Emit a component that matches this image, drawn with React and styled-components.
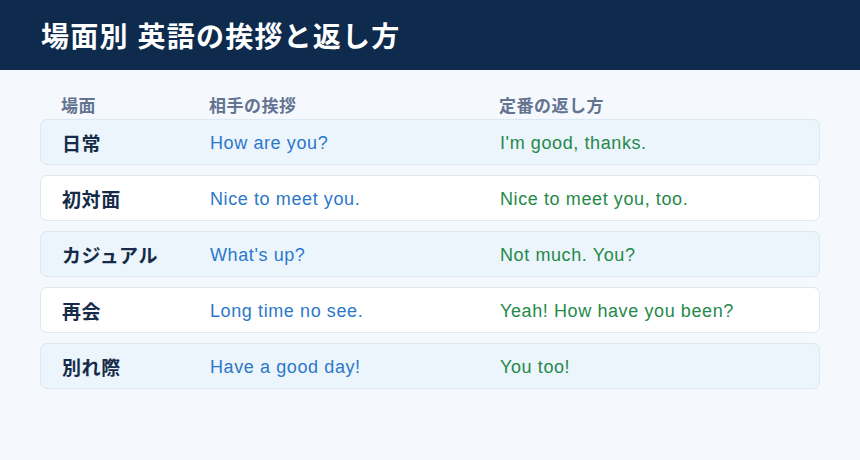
import React from "react";
import styled, { createGlobalStyle } from "styled-components";

const Global = createGlobalStyle`
  html, body { margin: 0; padding: 0; }
  body {
    width: 860px; height: 460px; overflow: hidden;
    background: #f5f9fe;
    font-family: "Liberation Sans", "Noto Sans CJK JP", sans-serif;
  }
`;

const Page = styled.div`
  width: 860px;
  height: 460px;
  background: #f5f9fe;
  display: flex;
  flex-direction: column;
`;

const Header = styled.header`
  height: 70px;
  background: #0e2b4e;
  display: flex;
  align-items: center;
  padding: 0 41px;
  box-sizing: border-box;
`;

const Title = styled.h1`
  margin: 0;
  color: #ffffff;
  font-size: 28px;
  font-weight: 700;
  letter-spacing: 1.2px;
`;

const Table = styled.div`
  margin: 21px 40px 0;
  display: flex;
  flex-direction: column;
  gap: 10px;
`;

const Row = styled.div`
  display: grid;
  grid-template-columns: 148px 290px 1fr;
  align-items: center;
  padding: 0 21px;
  height: ${(p) => (p.$head ? "26px" : "46px")};
  box-sizing: border-box;
  border-radius: 7px;
  border: ${(p) => (p.$head ? "none" : "1px solid #dbe7f3")};
  background: ${(p) => (p.$head ? "transparent" : p.$alt ? "#ecf4fc" : "#ffffff")};
  margin-bottom: ${(p) => (p.$head ? "-8px" : "0")};
`;

const HeadCell = styled.div`
  font-size: 17px;
  font-weight: 700;
  color: #637390;
  letter-spacing: 0.5px;
`;

const Scene = styled.div`
  font-size: 19px;
  font-weight: 700;
  color: #152b48;
  letter-spacing: 0.6px;
`;

const Phrase = styled.div`
  font-size: 18px;
  line-height: 24px;
  padding-top: 2px;
  letter-spacing: 0.6px;
  color: ${(p) => (p.$reply ? "#25894a" : "#2b78cb")};
`;

const rows = [
  ["日常", "How are you?", "I'm good, thanks."],
  ["初対面", "Nice to meet you.", "Nice to meet you, too."],
  ["カジュアル", "What's up?", "Not much. You?"],
  ["再会", "Long time no see.", "Yeah! How have you been?"],
  ["別れ際", "Have a good day!", "You too!"],
];

export default function App() {
  return (
    <Page>
      <Global />
      <Header>
        <Title>場面別 英語の挨拶と返し方</Title>
      </Header>
      <Table>
        <Row $head>
          <HeadCell>場面</HeadCell>
          <HeadCell>相手の挨拶</HeadCell>
          <HeadCell>定番の返し方</HeadCell>
        </Row>
        {rows.map(([s, a, b], i) => (
          <Row key={s} $alt={i % 2 === 0}>
            <Scene>{s}</Scene>
            <Phrase>{a}</Phrase>
            <Phrase $reply>{b}</Phrase>
          </Row>
        ))}
      </Table>
    </Page>
  );
}
